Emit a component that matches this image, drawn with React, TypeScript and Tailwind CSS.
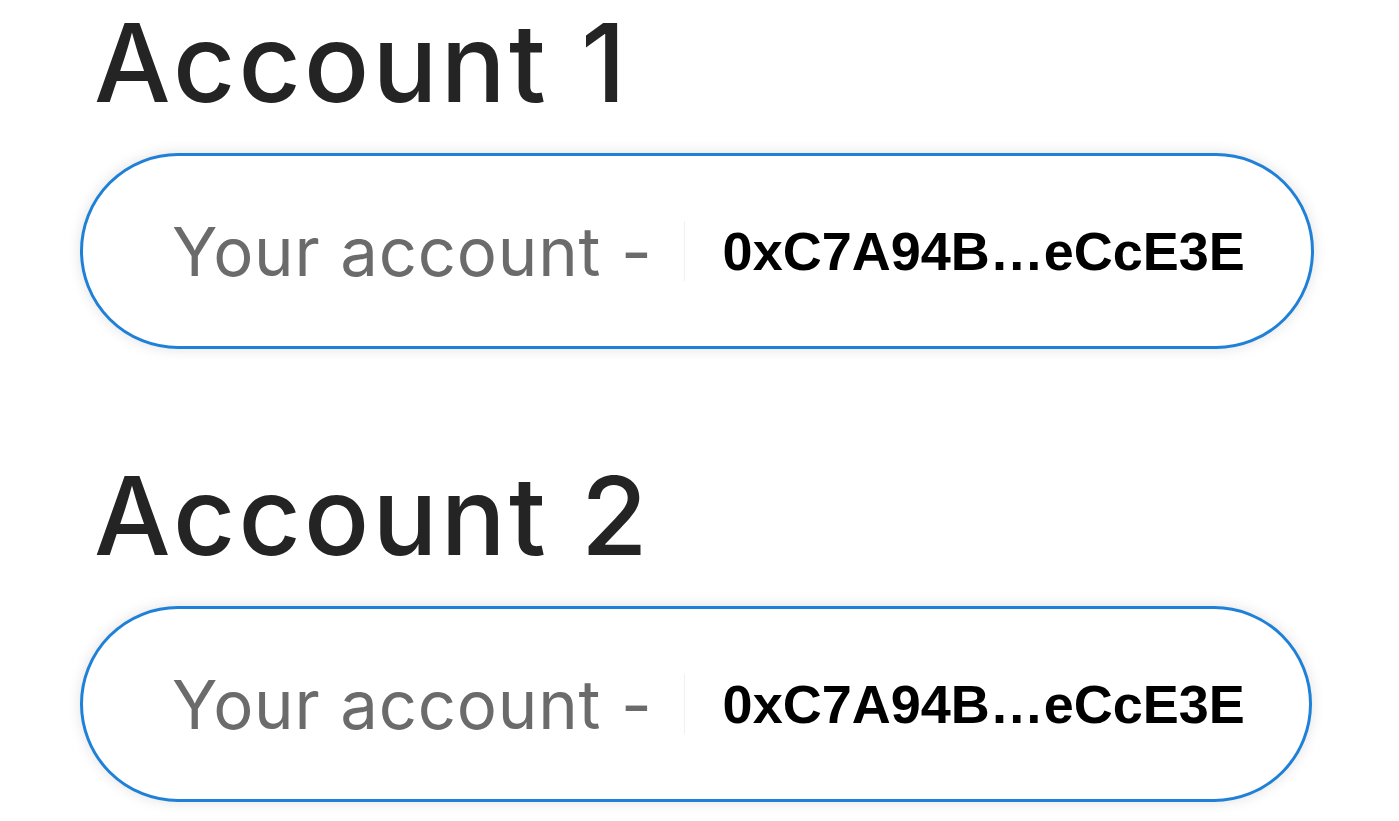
import React from 'react';

interface AccountRowProps {
  title: string;
  address: string;
  width: string;
}

const AccountRow: React.FC<AccountRowProps> = ({ title, address, width }) => {
  return (
    <section>
      <h2
        className="pl-[14px] text-[108px] leading-[1.15] font-medium tracking-[0.03em] text-[#242424]"
        style={{ fontFamily: 'Inter, "Noto Sans", sans-serif' }}
      >
        {title}
      </h2>
      <div
        className={`mt-[28px] ${width} h-[196px] rounded-full border-[3px] border-[#1f80d8] bg-white shadow-[0_0_14px_rgba(0,0,0,0.12)] flex items-center pl-[89px]`}
      >
        <span
          className="text-[67px] leading-none tracking-[0.012em] text-[#6b6b6b]"
          style={{ fontFamily: 'Inter, "Noto Sans", sans-serif' }}
        >
          Your account -
        </span>
        <span className="ml-[31px] w-px h-[60px] bg-[#eef3ee]" />
        <span
          className="ml-[38px] text-[54px] leading-none font-bold text-black"
          style={{ fontFamily: '"Liberation Sans", Arial, sans-serif' }}
        >
          {address}
        </span>
      </div>
    </section>
  );
};

export default function App() {
  return (
    <div className="w-[1399px] h-[821px] bg-white overflow-hidden pl-[80px] pt-[1px]">
      <AccountRow title="Account 1" address="0xC7A94B…eCcE3E" width="w-[1234px]" />
      <div className="h-[105px]" />
      <AccountRow title="Account 2" address="0xC7A94B…eCcE3E" width="w-[1232px]" />
    </div>
  );
}
